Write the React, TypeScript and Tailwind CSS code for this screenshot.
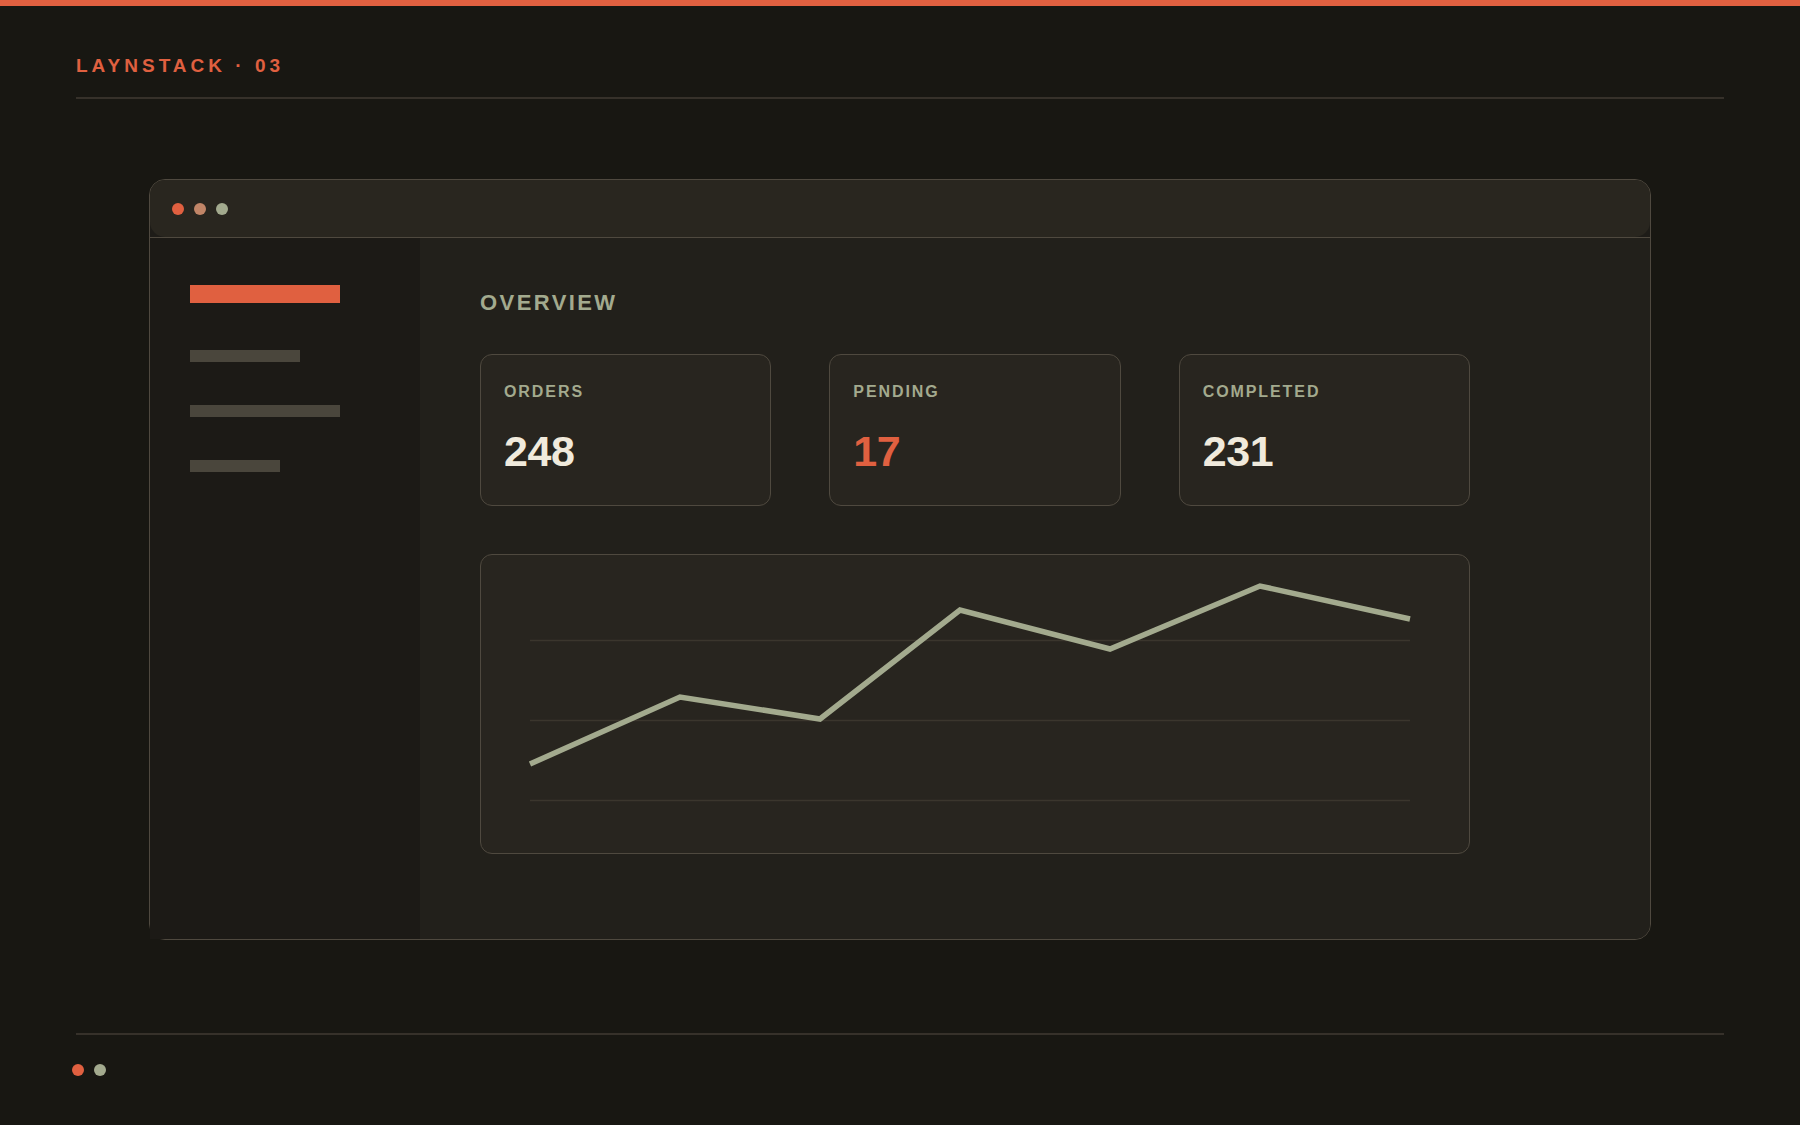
const sans = "font-['Liberation_Sans',Arial,sans-serif]";

type Stat = { label: string; value: string; accent?: boolean };

const stats: Stat[] = [
  { label: "ORDERS", value: "248" },
  { label: "PENDING", value: "17", accent: true },
  { label: "COMPLETED", value: "231" },
];

// chart points in card-local pixels
const points: [number, number][] = [
  [49, 209],
  [199, 142],
  [339, 164],
  [479, 55],
  [629, 94],
  [779, 31],
  [929, 64],
];

function StatCard({ stat }: { stat: Stat }) {
  return (
    <div className="rounded-[12px] border-[1.5px] border-[#4f493f] bg-[#28251f] px-[23px] pt-[29px] pb-[32px]">
      <div className="text-[16px] leading-none font-bold tracking-[0.12em] text-[#a3aa8e]">{stat.label}</div>
      <div
        className={`mt-[30px] text-[43px] leading-none font-bold tracking-[-0.01em] ${stat.accent ? "text-[#e06040]" : "text-[#f0eadc]"}`}
      >
        {stat.value}
      </div>
    </div>
  );
}

function LineChart() {
  const d = points.map(([x, y], i) => `${i === 0 ? "M" : "L"}${x} ${y}`).join(" ");
  return (
    <div className="mt-[48px] h-[300px] rounded-[12px] border-[1.5px] border-[#4f493f] bg-[#28251f]">
      <svg width="988" height="298" viewBox="0 0 988 298" className="block">
        {[85.5, 165.5, 245.5].map((y) => (
          <line key={y} x1="49" x2="929" y1={y} y2={y} stroke="#3b362d" strokeWidth="1.5" />
        ))}
        <path d={d} fill="none" stroke="#a3aa8e" strokeWidth="5.5" strokeLinejoin="miter" strokeLinecap="butt" />
      </svg>
    </div>
  );
}

export default function App() {
  return (
    <div className={`flex h-[1125px] w-full flex-col bg-[#181712] ${sans}`}>
      <div className="h-[6px] bg-[#e06040]" />

      <header className="px-[76px] pt-[50px]">
        <div className="text-[19px] leading-[19px] font-bold tracking-[4px] text-[#e06040]">LAYNSTACK · 03</div>
        <div className="mt-[22px] h-[2px] bg-[#36312a]" />
      </header>

      {/* app window */}
      <div className="mx-auto mt-[80px] flex h-[761px] w-[1502px] flex-col rounded-[16px] border-[1.5px] border-[#4f493f] bg-[#1e1c18]">
        <div className="flex h-[57px] items-center gap-[10px] rounded-[15px] bg-[#29261f] pl-[22px]">
          <span className="h-[12px] w-[12px] rounded-full bg-[#e06040]" />
          <span className="h-[12px] w-[12px] rounded-full bg-[#c18567]" />
          <span className="h-[12px] w-[12px] rounded-full bg-[#a3aa8e]" />
        </div>

        <div className="flex flex-1 border-t-[1.5px] border-[#4f493f]">
          <aside className="flex w-[270px] flex-col bg-[#1c1a16] pt-[47px] pl-[40px]">
            <div className="h-[18px] w-[150px] bg-[#e06040]" />
            <div className="mt-[47px] h-[12px] w-[110px] bg-[#4a463c]" />
            <div className="mt-[43px] h-[12px] w-[150px] bg-[#4a463c]" />
            <div className="mt-[43px] h-[12px] w-[90px] bg-[#4a463c]" />
          </aside>

          <main className="flex-1 rounded-br-[15px] bg-[#22201b] pt-[54px] pl-[60px]">
            <div className="w-[990px]">
              <h2 className="text-[22px] leading-none font-bold tracking-[0.11em] text-[#a3aa8e]">OVERVIEW</h2>
              <div className="mt-[40px] grid grid-cols-3 gap-[58px]">
                {stats.map((s) => (
                  <StatCard key={s.label} stat={s} />
                ))}
              </div>
              <LineChart />
            </div>
          </main>
        </div>
      </div>

      <div className="mx-[76px] mt-[93px] h-[2px] bg-[#36312a]" />
      <div className="mt-[29px] flex gap-[10px] pl-[72px]">
        <span className="h-[12px] w-[12px] rounded-full bg-[#e06040]" />
        <span className="h-[12px] w-[12px] rounded-full bg-[#a3aa8e]" />
      </div>
    </div>
  );
}
